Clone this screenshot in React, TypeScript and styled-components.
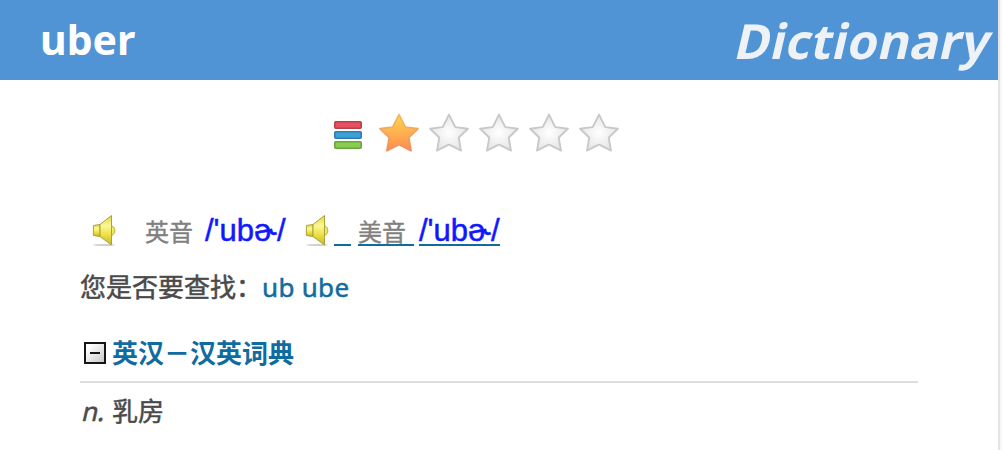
import React from 'react'
import styled, { createGlobalStyle } from 'styled-components'

const STAR =
  'M20 2.6 L26 14.6 Q26.2 15 26.8 15.1 L38.9 16.7 L30 25.2 Q29.7 25.6 29.8 26.2 L32 38.6 L20.8 32.8 Q20 32.4 19.2 32.8 L8 38.6 L10.2 26.2 Q10.3 25.6 10 25.2 L1.1 16.7 L13.2 15.1 Q13.8 15 14 14.6 Z'

const Star = ({ filled }: { filled?: boolean }) => (
  <svg width="40" height="42" viewBox="0 0 40 42">
    <defs>
      <linearGradient id="gold" x1="0" y1="0" x2="0" y2="1">
        <stop offset="0.1" stopColor="#ffd04e" />
        <stop offset="0.9" stopColor="#ff9250" />
      </linearGradient>
      <linearGradient id="goldEdge" x1="0" y1="0" x2="0" y2="1">
        <stop offset="0" stopColor="#efbd62" />
        <stop offset="1" stopColor="#f08d5c" />
      </linearGradient>
      <radialGradient id="silver">
        <stop offset="0" stopColor="#ffffff" />
        <stop offset="1" stopColor="#e6e6e6" />
      </radialGradient>
    </defs>
    <path
      d={STAR}
      fill={filled ? 'url(#gold)' : 'url(#silver)'}
      stroke={filled ? 'url(#goldEdge)' : '#c8c8c8'}
      strokeWidth="1.9"
      strokeLinejoin="round"
    />
  </svg>
)

const Books = () => (
  <svg width="30" height="30" viewBox="0 0 30 30">
    <rect x="1.8" y="1.8" width="26.4" height="6.4" rx="1" fill="#e7505f" stroke="#b8404c" strokeWidth="1.6" />
    <rect x="1.8" y="11.8" width="26.4" height="6.4" rx="1" fill="#39a2d8" stroke="#347bae" strokeWidth="1.6" />
    <rect x="1.8" y="21.8" width="26.4" height="6.4" rx="1" fill="#8bcc50" stroke="#69a540" strokeWidth="1.6" />
  </svg>
)

const Speaker = () => (
  <svg width="30" height="34" viewBox="0 0 30 34">
    <defs>
      <linearGradient id="brass" x1="0" y1="0" x2="0" y2="1">
        <stop offset="0" stopColor="#e0d743" />
        <stop offset="0.35" stopColor="#fbf795" />
        <stop offset="0.65" stopColor="#eee145" />
        <stop offset="1" stopColor="#c5b62c" />
      </linearGradient>
    </defs>
    <ellipse cx="14" cy="31" rx="11" ry="0.9" fill="#cfcfcf" />
    <path d="M20 11.5 Q24.8 12 24.8 16.5 Q24.8 21 20 22Z" fill="#efe66a" stroke="#b3ad42" />
    <path d="M3.4 11.5 L10 10.5 V22.5 L3.4 21.5Z" fill="url(#brass)" stroke="#aaa23b" />
    <path d="M10 10.5 L21.5 1.5 V31 L10 22.5Z" fill="url(#brass)" stroke="#aaa23b" strokeLinejoin="round" />
  </svg>
)

const Collapse = () => (
  <svg width="22" height="22" viewBox="0 0 22 22">
    <defs>
      <linearGradient id="bevel" x1="0" y1="0" x2="1" y2="1">
        <stop offset="0.2" stopColor="#fff" />
        <stop offset="1" stopColor="#c4c4c4" />
      </linearGradient>
    </defs>
    <rect x="1" y="1" width="20" height="20" fill="url(#bevel)" stroke="#161616" strokeWidth="2" />
    <path d="M6 11H16" stroke="#161616" strokeWidth="2" />
  </svg>
)

const App = () => {
  return (
    <Page>
      <GlobalStyle />
      <Panel>
        <Header>
          <Word>uber</Word>
          <Brand>Dictionary</Brand>
        </Header>
        <Rating>
          <Books />
          <Stars>
            <Star filled />
            <Star />
            <Star />
            <Star />
            <Star />
          </Stars>
        </Rating>
        <Entry>
          <Pronunciations>
            <Speaker />
            <Region $width={48} $before={25}>
              英音
            </Region>
            <Phonetic $before={12}>/'ubɚ/</Phonetic>
            <UsSpeaker>
              <Speaker />
            </UsSpeaker>
            <Underlined $width={17} />
            <Region $width={56} $before={7} $underline>
              美音
            </Region>
            <Phonetic $before={5} $underline>
              /'ubɚ/
            </Phonetic>
          </Pronunciations>
          <Suggestions>
            您是否要查找：<Suggestion>ub ube</Suggestion>
          </Suggestions>
          <SectionTitle>
            <Collapse />
            <h2>英汉－汉英词典</h2>
          </SectionTitle>
          <Meaning>
            <PartOfSpeech>n.</PartOfSpeech>乳房
          </Meaning>
        </Entry>
      </Panel>
    </Page>
  )
}

export default App

const GlobalStyle = createGlobalStyle`
  body {
    margin: 0;
    overflow: hidden;
  }
`

const Page = styled.div`
  box-sizing: border-box;
  height: 450px;
  padding-right: 2px;
  overflow: hidden;
  background: #f7f7f7;
  color: #4a4a4a;
  font-family: 'Noto Sans', 'Noto Sans CJK SC', sans-serif;
`

const Panel = styled.div`
  box-sizing: border-box;
  height: 450px;
  border-right: 2px solid #e5e5e5;
  background: #fff;
`

const Header = styled.header`
  display: flex;
  justify-content: space-between;
  height: 80px;
  padding: 0 6px 0 40px;
  background: #5094d6;
  font-weight: bold;
  line-height: 80px;
`

const Word = styled.h1`
  margin: 0;
  color: #fff;
  font-size: 41px;
  line-height: 78px;
`

const Brand = styled.div`
  color: #eef2f6;
  font-size: 48.5px;
  letter-spacing: 0.4px;
  transform: skewX(-13deg);
`

const Rating = styled.div`
  display: flex;
  align-items: flex-start;
  padding: 32px 0 0 333px;

  > svg {
    margin-top: 8px;
  }
`

const Stars = styled.div`
  display: flex;
  gap: 10px;
  margin-left: 16px;
`

const Entry = styled.main`
  padding: 0 80px;
`

const Pronunciations = styled.div`
  display: flex;
  align-items: flex-start;
  height: 50px;
  padding: 60px 0 0 10px;
  white-space: nowrap;

  svg {
    display: block;
  }
`

const UsSpeaker = styled.div`
  width: 30px;
  margin: 0 1px 0 17px;
`

const Underlined = styled.span<{ $width: number }>`
  box-sizing: border-box;
  width: ${p => p.$width}px;
  height: 32px;
  border-bottom: 2px solid #106c9f;
`

const Region = styled.span<{ $width: number; $before: number; $underline?: boolean }>`
  box-sizing: border-box;
  width: ${p => p.$width}px;
  height: 32px;
  margin-left: ${p => p.$before}px;
  border-bottom: 2px solid ${p => (p.$underline ? '#106c9f' : 'transparent')};
  color: #808080;
  font-size: 24px;
  line-height: 35px;
  -webkit-text-stroke: 0.4px;
`

const Phonetic = styled.span<{ $before: number; $underline?: boolean }>`
  box-sizing: border-box;
  width: 81px;
  height: 32px;
  margin-left: ${p => p.$before}px;
  border-bottom: 2px solid ${p => (p.$underline ? '#106c9f' : 'transparent')};
  color: #1018ff;
  font-family: 'Liberation Sans', sans-serif;
  font-size: 31px;
  line-height: 34px;
  -webkit-text-stroke: 0.5px;
`

const Suggestions = styled.div`
  height: 60px;
  font-size: 26px;
  line-height: 46px;
  -webkit-text-stroke: 0.5px;
`

const Suggestion = styled.a`
  color: #106c9f;
  letter-spacing: 0.3px;
`

const SectionTitle = styled.div`
  display: flex;
  align-items: center;
  height: 57px;
  padding-left: 4px;
  border-bottom: 2px solid #ddd;

  h2 {
    margin: 2px 0 0 6px;
    color: #106c9f;
    font-size: 26px;
    font-weight: bold;
    line-height: 57px;
  }
`

const Meaning = styled.div`
  font-size: 26px;
  line-height: 57px;
  -webkit-text-stroke: 0.5px;
`

const PartOfSpeech = styled.span`
  box-sizing: border-box;
  display: inline-block;
  width: 32px;
  padding-left: 3px;
  transform: skewX(-13deg);
`
